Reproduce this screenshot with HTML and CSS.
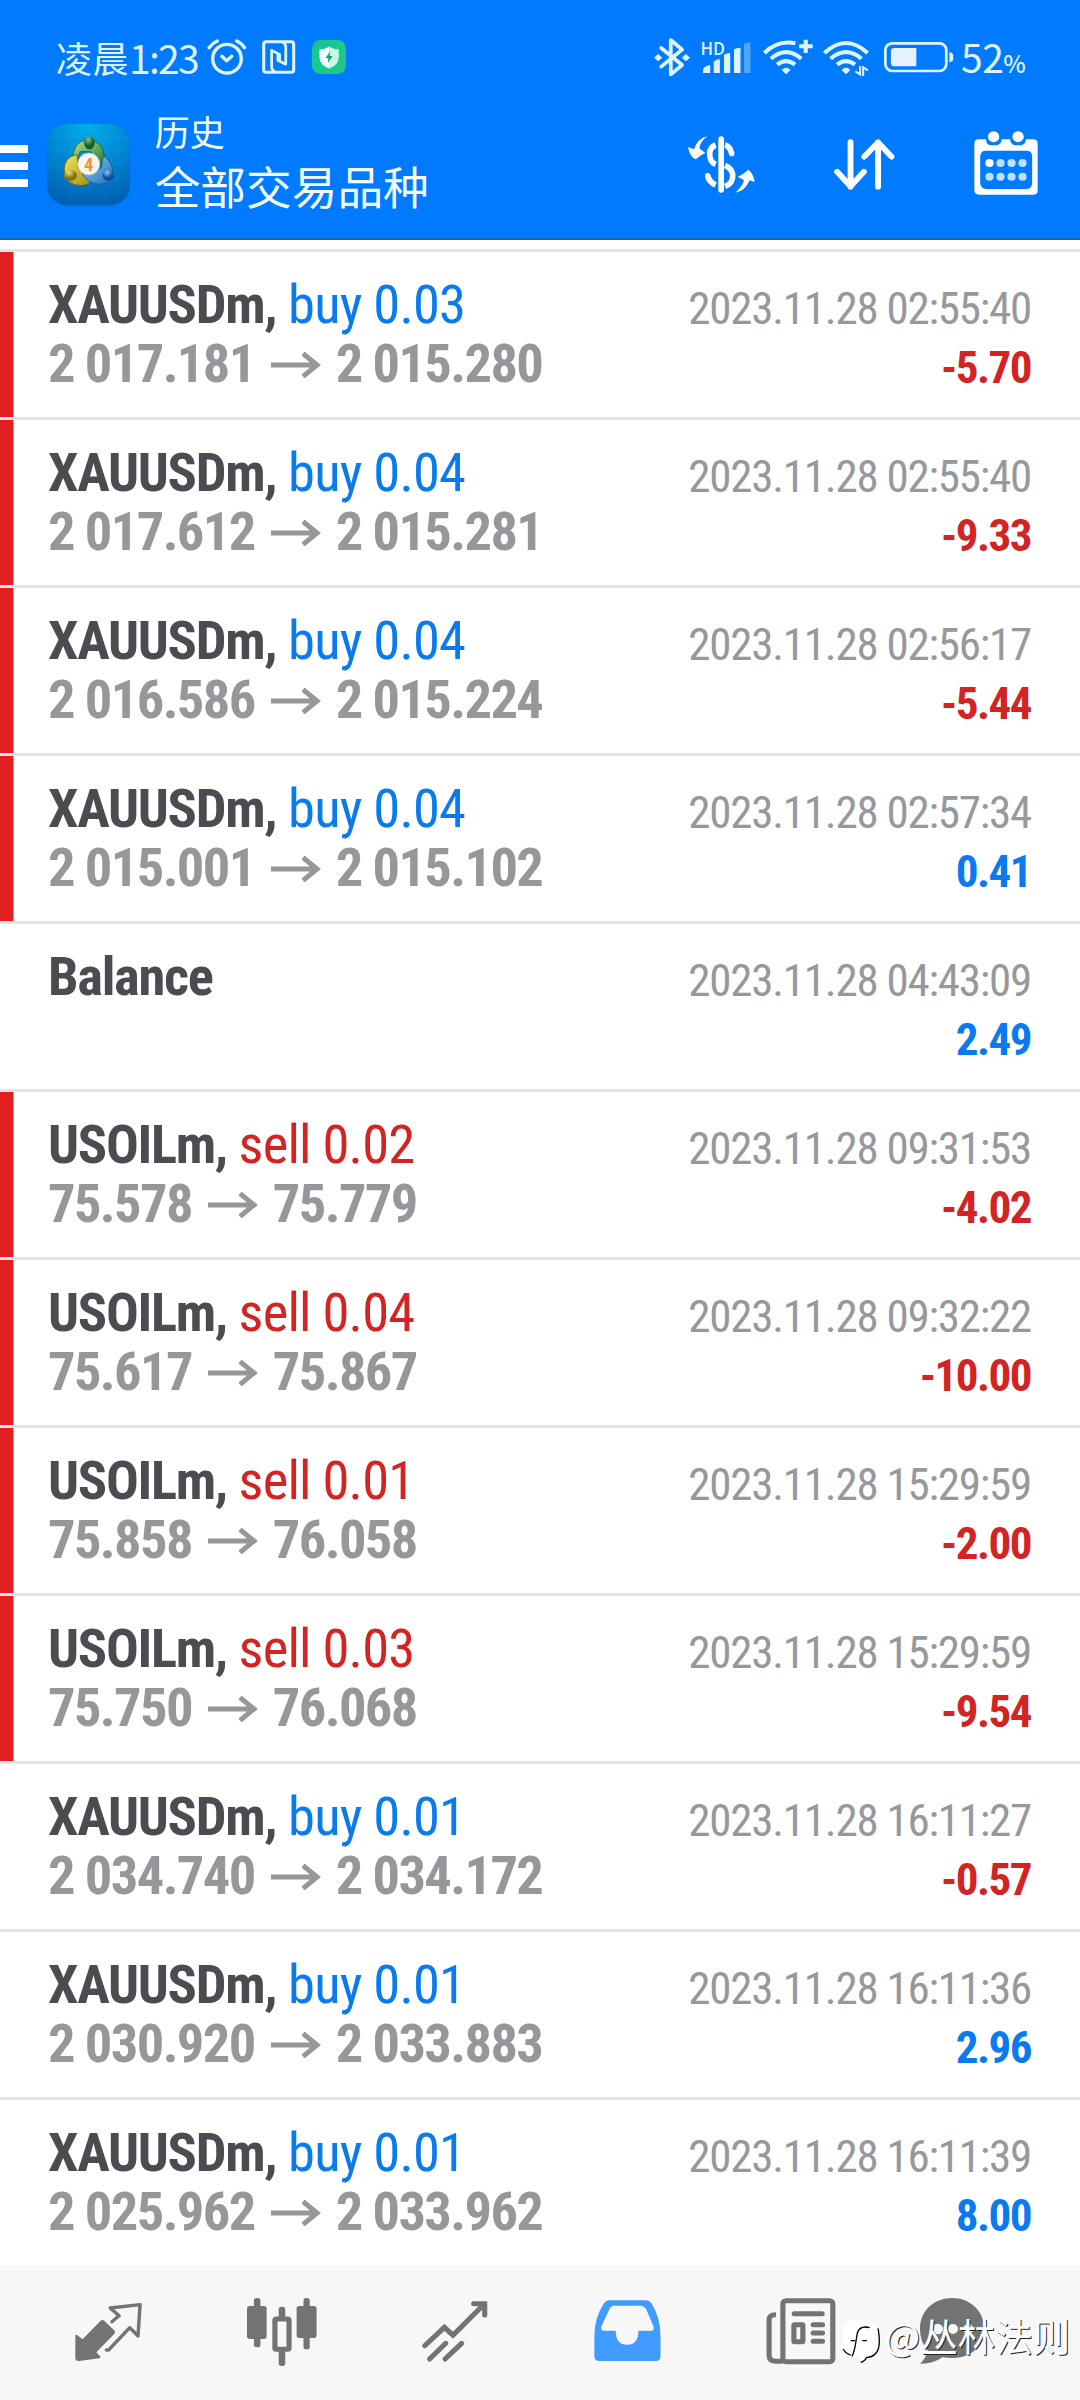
FILE: index.html
```html
<!DOCTYPE html>
<html lang="zh-CN">
<head>
<meta charset="utf-8">
<title>历史</title>
<link rel="stylesheet" href="styles.css">
</head>
<body>
<svg class="defs" aria-hidden="true">
  <symbol id="arrow" viewBox="0 0 50 26"><path d="M0 13H46M32 1.5L46 13L32 24.500" fill="none" stroke="currentColor" stroke-width="5"/></symbol>
</svg>
<div class="screen">
  <header class="top">
    <div class="status">
      <span class="clock"><span class="cjk">凌晨</span>1:23</span>
      <svg class="s-alarm" viewBox="600 56 115 108" preserveAspectRatio="none" fill="none" stroke="#dff3ff" stroke-width="10" stroke-linecap="round" stroke-linejoin="round"><ellipse cx="658" cy="115" rx="41.500" ry="43"/><path d="M643 108L657 121L672 108M606 82Q616 68 630 62M709 82Q700 68 686 62"/></svg>
      <svg class="s-nfc" viewBox="760 60 97 102" preserveAspectRatio="none" fill="none" stroke="#dff3ff" stroke-width="9"><rect x="765" y="65" width="87" height="92" rx="7"/><path d="M797 154Q788 151 788 141V91L811 103V124L824 130M818 66Q829 70 829 80V133L806 121V100" stroke-width="8" stroke-linejoin="round"/></svg>
      <svg class="s-guard" viewBox="0 0 34 34"><defs><linearGradient id="gg" x2="1" y2="1"><stop offset="0" stop-color="#1fbf8f"/><stop offset=".5" stop-color="#18cb91"/><stop offset="1" stop-color="#22c680"/></linearGradient></defs><rect width="34" height="34" rx="8.500" fill="url(#gg)"/><path d="M17 6.500Q21 9.500 26.500 9.500V17Q26.500 25 17 28.500Q7.500 25 7.500 17V9.500Q13 9.500 17 6.500Z" fill="#f1fffa"/><path d="M17 6.500Q21 9.500 26.500 9.500V17Q26.500 25 17 28.500Z" fill="#c9f7e4"/><path d="M18.300 11.500L13.500 18H16.500L15.800 23L20.500 16H17.500Z" fill="#169c68"/></svg>
      <span class="spacer"></span>
      <svg class="s-bt" viewBox="331 52 105 116" preserveAspectRatio="none" fill="none" stroke="#dff3ff" stroke-width="11" stroke-linecap="round" stroke-linejoin="round"><path d="M352 82L413 133L380 161V58L413 87L352 138"/><path d="M331 111l12-11l12 11l-12 11zM412 111l12-11l12 11l-12 11z" fill="#dff3ff" stroke="none"/></svg>
      <span class="hd">HD</span>
      <svg class="s-cell" viewBox="474 66 138 93" preserveAspectRatio="none" fill="#dff3ff"><path d="M474 159V149Q476 138 495 135V159Z"/><path d="M505 159V125Q512 118 523 118V159Z"/><path d="M535 159V104Q542 99 553 99V159Z"/><path d="M564 159V88Q571 83 583 83V159Z"/><path d="M593 159V72Q600 67 612 67V159Z" opacity=".35"/></svg>
      <svg class="s-wifi1" viewBox="649 56 145 107" preserveAspectRatio="none" fill="none" stroke="#dff3ff" stroke-width="12"><path d="M653 98Q692 58 743 69M672 115Q716 76 760 115M690 133Q716 112 742 133"/><path d="M703 149Q716 135 729 149L716 162Z" fill="#dff3ff" stroke="none"/><path d="M773 58V98M754 78H793"/></svg>
      <svg class="s-wifi2" viewBox="824 56 134 111" preserveAspectRatio="none" fill="none" stroke="#dff3ff" stroke-width="12"><path d="M828 98Q891 38 954 98M846 115Q891 76 936 115M865 133Q891 112 917 133"/><path d="M878 149Q891 135 904 149L891 162Z" fill="#dff3ff" stroke="none"/><path d="M932 137V162L918 153M941 167V141L955 150" stroke-width="6"/></svg>
      <svg class="s-bat" viewBox="1001 65 202 92" preserveAspectRatio="none"><rect x="1005" y="69" width="177" height="83" rx="20" fill="none" stroke="#dff3ff" stroke-width="8"/><path d="M1095 83V138H1031Q1021 138 1021 128V93Q1021 83 1031 83Z" fill="#e6f3ff"/><path d="M1191 95Q1202 97 1202 105V117Q1202 124 1191 126Z" fill="#dff3ff"/></svg>
      <span class="pct">52<small>%</small></span>
    </div>
    <div class="bar">
      <span class="menu"><i></i><i></i><i></i></span>
      <svg class="app" viewBox="18 38 251 249">
        <defs>
          <radialGradient id="bg" cx=".5" cy="0" r="1"><stop offset="0" stop-color="#00b0ea"/><stop offset=".5" stop-color="#0088d4"/><stop offset="1" stop-color="#005fb4"/></radialGradient>
          <linearGradient id="gn" x2="1" y2="1"><stop offset="0" stop-color="#b4e08e"/><stop offset="1" stop-color="#1b7a2c"/></linearGradient>
          <linearGradient id="yl" x2="1" y2="1"><stop offset="0" stop-color="#f0ea62"/><stop offset="1" stop-color="#a08a10"/></linearGradient>
          <linearGradient id="bl" x2="1" y2="1"><stop offset="0" stop-color="#8fd0f5"/><stop offset="1" stop-color="#1a6fb8"/></linearGradient>
          <radialGradient id="g2" cx=".4" cy=".25"><stop offset="0" stop-color="#86c885"/><stop offset="1" stop-color="#155c2a"/></radialGradient>
          <radialGradient id="y2" cx=".4" cy=".25"><stop offset="0" stop-color="#efe57c"/><stop offset="1" stop-color="#84700c"/></radialGradient>
          <radialGradient id="b2" cx=".4" cy=".25"><stop offset="0" stop-color="#8ccdf2"/><stop offset="1" stop-color="#0d4f95"/></radialGradient>
        </defs>
        <rect x="18.500" y="38.500" width="250" height="248" rx="62" fill="url(#bg)" stroke="#0a6cc4"/>
        <path d="M51 44V281M93 39V286M145 39V286M191 39V286M232 44V281M19 118H268M19 163H268M24 207H264M30 250H258M24 78H264" stroke="#5cc4f2" stroke-opacity=".28"/>
        <path d="M95 150Q96 92 138 88Q184 88 191 134Q194 160 170 168L150 124H118L110 150Z" fill="url(#gn)" stroke="#1a5a35" stroke-width="2.500"/>
        <path d="M108 132Q70 140 70 178Q72 226 122 226Q146 226 156 204L128 192L112 160Z" fill="url(#yl)" stroke="#655d14" stroke-width="2.500"/>
        <path d="M188 136Q216 154 217 188Q214 224 172 222Q138 218 124 188L150 192L182 172Z" fill="url(#bl)" stroke="#16558d" stroke-width="2.500"/>
        <ellipse cx="146" cy="97" rx="16" ry="20" fill="url(#g2)"/>
        <path d="M68 202Q70 178 90 178Q110 182 108 200Q100 214 84 212Z" fill="url(#y2)"/>
        <path d="M186 194Q188 176 204 178Q220 184 220 202Q212 214 196 211Q186 205 186 194Z" fill="url(#b2)"/>
        <circle cx="144" cy="161" r="33" fill="#f5f4f1" stroke="#bfc6bd" stroke-width="2"/>
        <text x="144" y="182" class="four">4</text>
      </svg>
      <div class="heading"><div class="sub">历史</div><div class="main">全部交易品种</div></div>
      <svg class="i-dollar" viewBox="26 46 200 171" fill="#fff"><rect x="117" y="47" width="17" height="169" rx="8"/><path d="M137 73Q152 76 157 99M137 134Q160 144 160 166Q160 189 137 197M109 73Q91 79 91 99Q91 124 109 131M85 165Q89 184 109 193" fill="none" stroke="#fff" stroke-width="17"/><circle cx="157" cy="99" r="8"/><circle cx="85" cy="165" r="8"/><path d="M84 47Q64 61 60 83L78 97Q65 102 49 116Q32 110 26 79L44 86Q55 53 84 47Z"/><path d="M168 216Q190 197 194 179L175 168Q191 162 207 147Q222 158 226 184L211 179Q196 213 168 216Z"/></svg>
      <svg class="i-sort" viewBox="856 356 176 152" preserveAspectRatio="none" fill="none" stroke="#fff" stroke-width="17" stroke-linecap="round" stroke-linejoin="round"><path d="M904 365V499M865 454L904 498L943 454M984 499V366M944 409L984 366L1023 409"/></svg>
      <svg class="i-cal" viewBox="1262 332 186 192" preserveAspectRatio="none"><path fill="#fff" fill-rule="evenodd" d="M1275 357H1297Q1298 375 1312 375H1328Q1341 372 1343 357H1367Q1369 374 1382 375H1399Q1411 373 1413 357H1435Q1447 358 1447 370V511Q1447 523 1433 523H1277Q1263 523 1263 510V370Q1263 357 1275 357ZM1296 391Q1281 391 1280 408V488Q1281 505 1296 506H1415Q1431 505 1431 488V408Q1431 391 1415 391Z"/><g fill="#fff"><circle cx="1319" cy="349" r="16.500"/><circle cx="1390" cy="349" r="16.500"/><circle cx="1307" cy="428" r="12"/></g><g fill="#bfe0ff"><circle cx="1339" cy="428" r="12"/><circle cx="1371" cy="428" r="12"/><circle cx="1403" cy="428" r="12"/><circle cx="1307" cy="469" r="12"/><circle cx="1339" cy="469" r="12"/><circle cx="1371" cy="469" r="12"/><circle cx="1403" cy="469" r="12"/></g></svg>
    </div>
  </header>
  <main class="list">
    <div class="row loss"><div class="deal"><div><b>XAUUSDm,</b> <span class="buy">buy 0.03</span></div><div class="price">2 017.181<svg><use href="#arrow"/></svg>2 015.280</div></div><div class="info"><div>2023.11.28 02:55:40</div><div class="neg">-5.70</div></div></div>
    <div class="row loss"><div class="deal"><div><b>XAUUSDm,</b> <span class="buy">buy 0.04</span></div><div class="price">2 017.612<svg><use href="#arrow"/></svg>2 015.281</div></div><div class="info"><div>2023.11.28 02:55:40</div><div class="neg">-9.33</div></div></div>
    <div class="row loss"><div class="deal"><div><b>XAUUSDm,</b> <span class="buy">buy 0.04</span></div><div class="price">2 016.586<svg><use href="#arrow"/></svg>2 015.224</div></div><div class="info"><div>2023.11.28 02:56:17</div><div class="neg">-5.44</div></div></div>
    <div class="row loss"><div class="deal"><div><b>XAUUSDm,</b> <span class="buy">buy 0.04</span></div><div class="price">2 015.001<svg><use href="#arrow"/></svg>2 015.102</div></div><div class="info"><div>2023.11.28 02:57:34</div><div class="pos">0.41</div></div></div>
    <div class="row"><div class="deal"><div><b>Balance</b></div></div><div class="info"><div>2023.11.28 04:43:09</div><div class="pos">2.49</div></div></div>
    <div class="row loss"><div class="deal"><div><b>USOILm,</b> <span class="sell">sell 0.02</span></div><div class="price">75.578<svg><use href="#arrow"/></svg>75.779</div></div><div class="info"><div>2023.11.28 09:31:53</div><div class="neg">-4.02</div></div></div>
    <div class="row loss"><div class="deal"><div><b>USOILm,</b> <span class="sell">sell 0.04</span></div><div class="price">75.617<svg><use href="#arrow"/></svg>75.867</div></div><div class="info"><div>2023.11.28 09:32:22</div><div class="neg">-10.00</div></div></div>
    <div class="row loss"><div class="deal"><div><b>USOILm,</b> <span class="sell">sell 0.01</span></div><div class="price">75.858<svg><use href="#arrow"/></svg>76.058</div></div><div class="info"><div>2023.11.28 15:29:59</div><div class="neg">-2.00</div></div></div>
    <div class="row loss"><div class="deal"><div><b>USOILm,</b> <span class="sell">sell 0.03</span></div><div class="price">75.750<svg><use href="#arrow"/></svg>76.068</div></div><div class="info"><div>2023.11.28 15:29:59</div><div class="neg">-9.54</div></div></div>
    <div class="row"><div class="deal"><div><b>XAUUSDm,</b> <span class="buy">buy 0.01</span></div><div class="price">2 034.740<svg><use href="#arrow"/></svg>2 034.172</div></div><div class="info"><div>2023.11.28 16:11:27</div><div class="neg">-0.57</div></div></div>
    <div class="row"><div class="deal"><div><b>XAUUSDm,</b> <span class="buy">buy 0.01</span></div><div class="price">2 030.920<svg><use href="#arrow"/></svg>2 033.883</div></div><div class="info"><div>2023.11.28 16:11:36</div><div class="pos">2.96</div></div></div>
    <div class="row"><div class="deal"><div><b>XAUUSDm,</b> <span class="buy">buy 0.01</span></div><div class="price">2 025.962<svg><use href="#arrow"/></svg>2 033.962</div></div><div class="info"><div>2023.11.28 16:11:39</div><div class="pos">8.00</div></div></div>
  </main>
  <nav class="tabs">
    <span class="tab"><svg class="n-quote" viewBox="218 189 194 175" preserveAspectRatio="none"><path d="M219 288Q219 282 225 286L240 298L292 243Q297 237 303 242L333 272Q336 278 331 283L280 337L291 349Q294 354 288 355L230 363Q219 364 219 354Z" fill="#737373"/><path d="M325 245L346 227L320 204L407 194L401 288L377 263L316 330H309" fill="none" stroke="#737373" stroke-width="10" stroke-linejoin="round" stroke-linecap="round"/></svg></span>
    <span class="tab"><svg class="n-candle" viewBox="715 174 202 204" preserveAspectRatio="none" fill="#737373"><rect x="715" y="198" width="57" height="99" rx="8"/><rect x="735" y="174" width="19" height="148" rx="8"/><rect x="859" y="198" width="58" height="96" rx="8"/><rect x="879" y="174" width="18" height="154" rx="8"/><rect x="807" y="200" width="19" height="40" rx="8"/><rect x="807" y="325" width="19" height="53" rx="8"/><rect x="796" y="237" width="41" height="91" rx="4" fill="#f7f7f7" stroke="#737373" stroke-width="15"/></svg></span>
    <span class="tab"><svg class="n-trade" viewBox="1223 182 191 182" preserveAspectRatio="none" fill="none" stroke="#737373" stroke-width="15" stroke-linecap="round"><path d="M1231 316L1288 261L1313 285L1401 194M1373 190H1405V224M1245 356L1292 309M1290 356L1338 309" /></svg></span>
    <span class="tab"><svg class="n-history" viewBox="157 181 193 183" preserveAspectRatio="none"><path fill="#409bff" fill-rule="evenodd" d="M200 182H308Q318 182 324 191Q350 235 350 290V350Q350 364 336 364H172Q158 364 158 350V290Q158 235 186 191Q192 182 200 182ZM214 198Q206 198 203 206L178 261Q176 272 186 273H220Q220 315 253 315Q286 315 286 273H322Q333 272 330 261L308 207Q302 199 294 198Z"/></svg></span>
    <span class="tab"><svg class="n-news" viewBox="656 173 202 200" preserveAspectRatio="none"><g fill="none" stroke="#737373" stroke-width="15"><rect x="705" y="181" width="145" height="183" rx="9"/><path d="M685 223Q665 222 665 240V345Q665 363 685 363H704"/><path d="M738 220H819M793 253H820M793 278H820M793 303H820" stroke-linecap="round"/><rect x="737" y="253" width="26" height="51" rx="2"/></g></svg></span>
    <span class="tab"><svg class="n-chat" viewBox="270 24 193 198"><path d="M270 117C270 60 314 24 367 24C420 24 463 64 463 116C463 175 413 214 337 202Q311 222 270 221Q288 205 293 180Q270 158 270 117Z" fill="#737373"/><g fill="#f7f7f7"><circle cx="323" cy="117" r="16"/><circle cx="369" cy="117" r="15"/><circle cx="415" cy="117" r="15"/></g></svg></span>
  </nav>
  <div class="mark">
    <svg viewBox="34 90 116 134"><path d="M36 120Q37 94 74 92Q138 92 142 118Q150 172 136 192Q124 206 108 205Q103 217 89 220Q93 204 86 203Q50 206 38 178Z" fill="#fff"/><path d="M117 116Q88 108 80 132L77 150Q72 187 64 202M60 155H73M95 155H109M142 118Q152 174 136 192Q124 206 108 205Q103 217 90 220M38 180Q44 193 60 198" fill="none" stroke="#000" stroke-width="4"/></svg>
    <span>@丛林法则</span>
  </div>
</div>
</body>
</html>
```
FILE: styles.css
```css
* { box-sizing: border-box; }
body { margin: 0; background: #fff; }
svg { display: block; flex: none; overflow: visible; }
.defs { position: absolute; width: 0; height: 0; }
.screen { position: relative; width: 1080px; height: 2400px; overflow: hidden; display: flex; flex-direction: column; font-family: "Roboto Condensed", Roboto, "Noto Sans CJK SC", sans-serif; }

.top { height: 240px; background: #007aff; border-bottom: 2px solid #1864b4; color: #f2fcff; font-family: "Noto Sans CJK SC", sans-serif; flex: none; }
.status { display: flex; align-items: flex-start; height: 110px; padding: 39px 0 0 56px; color: #dff3ff; }
.clock { display: flex; width: 150.600px; height: 38px; line-height: 36px; font-size: 39px; letter-spacing: -1.700px; white-space: nowrap; }
.cjk { font-size: 36px; letter-spacing: 0.500px; }
.s-alarm { width: 39.600px; height: 36px; margin-top: -0.500px; }
.s-nfc { width: 33.400px; height: 34px; margin: 1px 0 0 15.800px; }
.s-guard { width: 34px; height: 34px; margin: 1px 0 0 16.500px; }
.spacer { flex: 1; }
.s-bt { width: 36px; height: 38.700px; margin-top: -1.500px; }
.hd { width: 23px; margin: 0 -21px 0 11px; font: 500 17px/17px "Noto Sans CJK SC", sans-serif; }
.s-cell { width: 47.500px; height: 31px; margin: 3px 0 0 0; }
.s-wifi1 { width: 50px; height: 35.700px; margin: -0.500px 0 0 12.500px; }
.s-wifi2 { width: 46px; height: 37px; margin: -0.500px 0 0 10.500px; }
.s-bat { width: 69.500px; height: 30.700px; margin: 2.700px 0 0 15px; }
.pct { width: 119px; margin-left: 7.500px; font-size: 39px; line-height: 35px; white-space: nowrap; letter-spacing: -0.500px; }
.pct small { font-size: 24px; font-weight: 500; }

.bar { display: flex; align-items: flex-start; }
.menu { display: flex; flex-direction: column; gap: 9px; width: 27.500px; margin-top: 35px; }
.menu i { height: 8px; background: #fff; }
.app { width: 83.200px; height: 83px; margin: 12.500px 0 0 19px; }
.four { font: 700 56px "Roboto Condensed", Roboto, sans-serif; font-stretch: 75%; fill: #ef923c; text-anchor: middle; }
.heading { width: 532px; margin-left: 25px; white-space: nowrap; }
.sub { font-size: 35px; line-height: 42px; }
.main { font-size: 45.700px; line-height: 66px; margin-top: 0; }
.i-dollar { width: 66.700px; height: 57px; margin: 25.500px 0 0 1.500px; }
.i-sort { width: 60.600px; height: 50.700px; margin: 28.700px 0 0 79.500px; }
.i-cal { width: 64px; height: 64px; margin: 20.700px 0 0 79.500px; }

.list { border-top: 3px solid #e5e5e5; margin-top: 9px; flex: none; font-stretch: 75%; }
.row { display: flex; justify-content: space-between; height: 168px; padding: 0 49px 0 48px; border-bottom: 3px solid #e5e5e5; line-height: 59px; white-space: nowrap; }
.row:last-child { height: 165px; border-bottom: 0; }
.loss { background: linear-gradient(#e21e1e, #e21e1e) 0 0 / 13.500px 100% no-repeat; background-clip: padding-box; }
.deal { padding-top: 23px; font-size: 54.500px; letter-spacing: -0.800px; color: #4c4b51; }
.deal b { letter-spacing: -1.300px; }
.deal .price { display: flex; color: #96979b; font-weight: 700; letter-spacing: -1.620px; }
.price svg { width: 50px; height: 26px; margin: 18px 15px 0 16px; }
.info { padding: 27px 0 0; font-size: 45px; letter-spacing: -1.230px; color: #97989c; text-align: right; }
.neg, .pos { font-weight: 700; letter-spacing: -1.500px; }
.buy, .pos { color: #0a7af0; }
.sell, .neg { color: #d32323; }

.tabs { display: flex; flex: 1; align-items: flex-start; padding: 0 0 0 22px; background: #f7f7f7; }
.tab { display: flex; width: 173px; justify-content: center; }
.tab:last-child { width: 130px; }
.n-quote { width: 66.800px; height: 58.300px; margin-top: 38px; }
.n-candle { width: 69.600px; height: 68px; margin-top: 33px; }
.n-trade { width: 65.800px; height: 60.700px; margin-top: 35.700px; }
.n-history { width: 66.500px; height: 61px; margin-top: 35.300px; }
.n-news { width: 69.600px; height: 66.700px; margin-top: 32.700px; }
.n-chat { width: 64.300px; height: 66px; margin-top: 33px; }

.mark { position: absolute; left: 842px; top: 2308px; display: flex; color: #fff; font: 37.500px/54px "Noto Sans CJK SC", sans-serif; white-space: nowrap; text-shadow: 1px 1px 0 #222; }
.mark svg { width: 38.700px; height: 44.700px; margin: 11px 4px 0 0; }
```
